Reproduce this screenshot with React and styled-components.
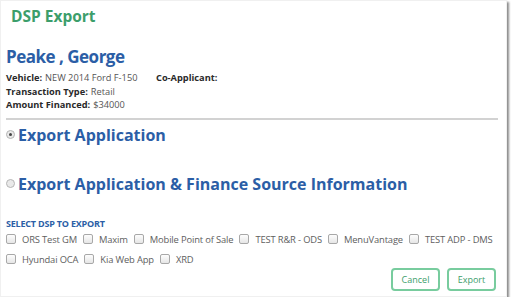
import React from "react";
import styled, { createGlobalStyle } from "styled-components";

const GlobalStyle = createGlobalStyle`
	html, body {
		margin: 0;
		padding: 0;
		background: #fff;
	}
	body {
		font-family: "Open Sans", "Liberation Sans", sans-serif;
	}
`;

const Dialog = styled.div`
	width: 507px;
	height: 297px;
	box-sizing: border-box;
	background: #fff;
	border: 1px solid #f0f0f0;
	box-shadow: 2px 2px 2px rgba(0, 0, 0, 0.45);
	padding: 4px 8px 0 5px;
	display: flex;
	flex-direction: column;
	overflow: hidden;
`;

const Title = styled.h1`
	margin: 0 0 0 5px;
	font-size: 15.5px;
	font-weight: 700;
	color: #3c9e6b;
	line-height: 22px;
`;

const Customer = styled.h2`
	margin: 18px 0 0 0;
	font-size: 17px;
	font-weight: 700;
	letter-spacing: -0.5px;
	color: #2b5ea6;
	line-height: 24px;
`;

const InfoRow = styled.div`
	display: flex;
	margin-top: ${({ top }) => top || 0}px;
	font-size: 9.25px;
	line-height: 13.5px;
	color: #555;
`;

const Field = styled.span`
	min-width: ${({ width }) => width || 0}px;
`;

const Label = styled.b`
	color: #2a2a2a;
	font-weight: 700;
	margin-right: 3px;
`;

const Divider = styled.hr`
	margin: 6px 0 0 0;
	border: none;
	height: 2px;
	background: #d2d2d2;
`;

const Option = styled.label`
	display: flex;
	align-items: center;
	gap: 3px;
	margin-top: ${({ top }) => top}px;
	font-size: 16px;
	font-weight: 700;
	color: #2b5ea6;
	line-height: 22px;
`;

const Radio = styled.span`
	width: 7px;
	height: 7px;
	border-radius: 50%;
	border: 1px solid #b5b5b5;
	background: #e9e9e9;
	display: flex;
	align-items: center;
	justify-content: center;
	flex-shrink: 0;

	&::after {
		content: "";
		width: 3px;
		height: 3px;
		border-radius: 50%;
		background: ${({ checked }) => (checked ? "#444" : "transparent")};
	}
`;

const SectionLabel = styled.div`
	margin-top: 23px;
	font-size: 9px;
	font-weight: 700;
	letter-spacing: -0.2px;
	color: #2b5ea6;
	line-height: 12px;
`;

const CheckList = styled.div`
	display: flex;
	flex-wrap: wrap;
	row-gap: 7px;
	column-gap: 6px;
	margin-top: 3px;
`;

const CheckItem = styled.label`
	display: flex;
	align-items: center;
	gap: 6px;
	font-size: 9.4px;
	letter-spacing: -0.15px;
	color: #606060;
	line-height: 13px;
`;

const Box = styled.span`
	width: 8px;
	height: 8px;
	border: 1px solid #a8a8a8;
	border-radius: 2px;
	background: linear-gradient(#fdfdfd, #e6e6e6);
	flex-shrink: 0;
`;

const Footer = styled.div`
	display: flex;
	justify-content: flex-end;
	gap: 7px;
	margin-top: auto;
	margin-bottom: 5px;
	padding-right: 2px;
`;

const Button = styled.button`
	width: 49px;
	height: 23px;
	box-sizing: border-box;
	border: 2px solid #78cc9e;
	border-radius: 4px;
	background: #fff;
	color: #3c9e6b;
	font-family: "Open Sans", "Liberation Sans", sans-serif;
	font-size: 9px;
	padding: 0;
	cursor: pointer;
`;

const dsps = [
	"ORS Test GM",
	"Maxim",
	"Mobile Point of Sale",
	"TEST R&R - ODS",
	"MenuVantage",
	"TEST ADP - DMS",
	"Hyundai OCA",
	"Kia Web App",
	"XRD",
];

export default function App() {
	return (
		<>
			<GlobalStyle />
			<Dialog>
				<Title>DSP Export</Title>
				<Customer>Peake , George</Customer>
				<InfoRow top={2}>
					<Field width={150}>
						<Label>Vehicle:</Label>NEW 2014 Ford F-150
					</Field>
					<Field>
						<Label>Co-Applicant:</Label>
					</Field>
				</InfoRow>
				<InfoRow>
					<Field>
						<Label>Transaction Type:</Label>Retail
					</Field>
				</InfoRow>
				<InfoRow>
					<Field>
						<Label>Amount Financed:</Label>$34000
					</Field>
				</InfoRow>
				<Divider />
				<Option top={4}>
					<Radio checked />
					Export Application
				</Option>
				<Option top={27}>
					<Radio />
					Export Application &amp; Finance Source Information
				</Option>
				<SectionLabel>SELECT DSP TO EXPORT</SectionLabel>
				<CheckList>
					{dsps.map((name) => (
						<CheckItem key={name}>
							<Box />
							{name}
						</CheckItem>
					))}
				</CheckList>
				<Footer>
					<Button>Cancel</Button>
					<Button>Export</Button>
				</Footer>
			</Dialog>
		</>
	);
}
